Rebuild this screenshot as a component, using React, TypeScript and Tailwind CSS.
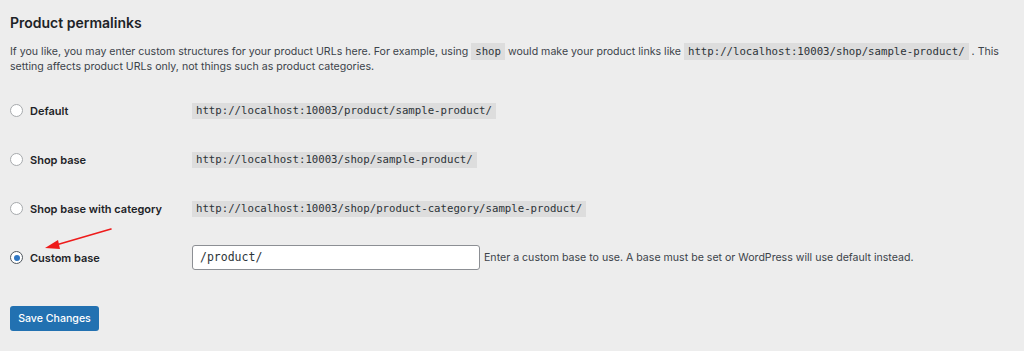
import React from "react";

const mono = { fontFamily: '"DejaVu Sans Mono", "Liberation Mono", monospace' };

function Code({ children }: { children: React.ReactNode }) {
  return (
    <code
      className="bg-[#dddddd] px-[4px] py-[2px] text-[10.7px] leading-[12px] text-[#2c3338]"
      style={mono}
    >
      {children}
    </code>
  );
}

function Radio({ checked }: { checked?: boolean }) {
  return (
    <span
      className={
        "flex h-[13px] w-[13px] shrink-0 items-center justify-center rounded-full border bg-white " +
        (checked ? "border-[#50575e]" : "border-[#a7aaad]")
      }
    >
      {checked ? <span className="h-[6px] w-[6px] rounded-full bg-[#2f76c2]" /> : null}
    </span>
  );
}

function Row({
  label,
  checked,
  children,
}: {
  label: string;
  checked?: boolean;
  children: React.ReactNode;
}) {
  return (
    <div className="flex h-[49px] items-center">
      <div className="flex w-[182px] shrink-0 items-center gap-[7px]">
        <Radio checked={checked} />
        <span className="pt-[2px] text-[11px] font-semibold text-[#1d2327]">{label}</span>
      </div>
      <div className="flex items-center">{children}</div>
    </div>
  );
}

export default function App() {
  return (
    <div
      className="relative h-[351px] w-[1024px] overflow-hidden bg-[#ededed] pl-[10px] pt-[14px] text-[#3c434a]"
      style={{ fontFamily: 'Inter, "Noto Sans", "Liberation Sans", sans-serif' }}
    >
      <h2 className="text-[14px] font-semibold leading-[18px] text-[#1d2327]">Product permalinks</h2>
      <p className="mt-[12px] text-[10.6px] leading-[15px]">
        If you like, you may enter custom structures for your product URLs here. For example, using{" "}
        <Code>shop</Code> would make your product links like{" "}
        <Code>http://localhost:10003/shop/sample-product/</Code> . This
        <br />
        setting affects product URLs only, not things such as product categories.
      </p>
      <div className="mt-[12px] flex flex-col">
        <Row label="Default">
          <Code>http://localhost:10003/product/sample-product/</Code>
        </Row>
        <Row label="Shop base">
          <Code>http://localhost:10003/shop/sample-product/</Code>
        </Row>
        <Row label="Shop base with category">
          <Code>http://localhost:10003/shop/product-category/sample-product/</Code>
        </Row>
        <Row label="Custom base" checked>
          <div
            className="flex h-[25px] w-[288px] items-center rounded-[3px] border border-[#8c8f94] bg-white px-[7px] text-[11.5px] text-[#2c3338]"
            style={mono}
          >
            /product/
          </div>
          <span className="ml-[4px] text-[10.6px] text-[#3c434a]">
            Enter a custom base to use. A base must be set or WordPress will use default instead.
          </span>
        </Row>
      </div>
      <div className="mt-[24px] flex">
        <button className="flex h-[25px] w-[89px] items-center justify-center rounded-[3px] bg-[#2271b1] text-[10.6px] font-medium text-white">
          Save Changes
        </button>
      </div>
      <svg
        className="pointer-events-none absolute left-0 top-0"
        width="1024"
        height="351"
        viewBox="0 0 1024 351"
      >
        <line x1="111" y1="229" x2="56" y2="245" stroke="#ee1b1b" strokeWidth="1.6" strokeLinecap="round" />
        <polygon points="45,248 58,240 60,249" fill="#ee1b1b" />
      </svg>
    </div>
  );
}
